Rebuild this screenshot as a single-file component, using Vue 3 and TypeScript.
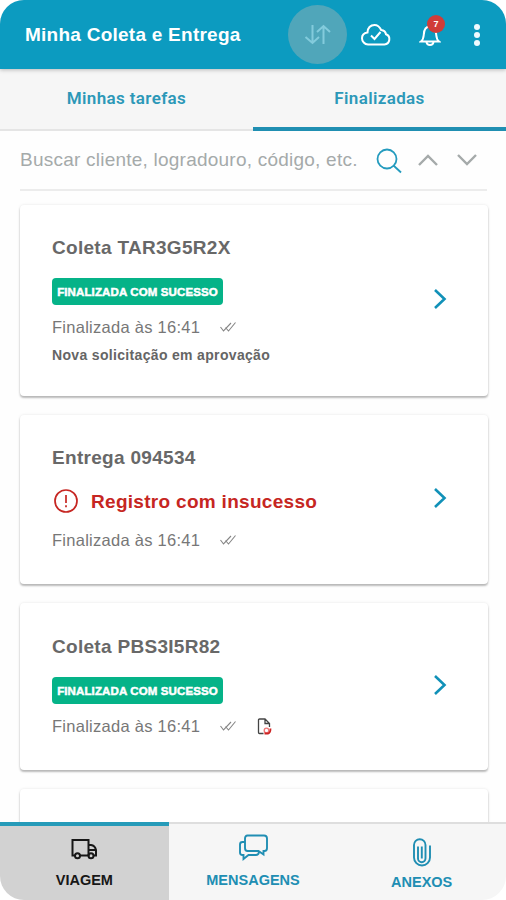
<script setup lang="ts">
interface Task {
  title: string
  success: boolean
  time: string
  note?: string
  document?: boolean
  size: string
}

const tasks: Task[] = [
  { title: 'Coleta TAR3G5R2X', success: true, time: '16:41', note: 'Nova solicitação em aprovação', size: 'tall' },
  { title: 'Entrega 094534', success: false, time: '16:41', size: 'medium' },
  { title: 'Coleta PBS3I5R82', success: true, time: '16:41', document: true, size: 'short' },
]
</script>

<template>
  <div class="screen">
    <header class="topbar">
      <h1>Minha Coleta e Entrega</h1>
      <button class="sync" aria-label="Sincronizar">
        <svg width="28" height="24" viewBox="0 0 28 24"><path d="M8.500 2v18M1.500 14l7 6 6.500-6M19.500 21V3M13 9l6.500-6 6.500 6" /></svg>
      </button>
      <svg class="cloud" width="32" height="24" viewBox="0 0 32 24">
        <path d="M8 21.500h16.500a5.300 5.300 0 0 0 1.500-10.200c-.5-2.800-2.500-4-4.800-4.300C19.500 3.500 17.500 2 14.500 2 10.500 2 7.500 5 7.500 9.500 4 10 2 12 2 15.200a6.300 6.300 0 0 0 6 6.300z" />
        <path d="m11 12.500 3.500 3.500 6-7" />
      </svg>
      <div class="bell">
        <svg width="22" height="24" viewBox="0 0 22 24">
          <path d="M2 18.500c2.500-2 2.500-3.500 2.800-7C5 6.500 7 3.500 11 3.500s6 3 6.200 8c.3 3.500.3 5 2.800 7z" />
          <path d="M7.500 19c.5 4 6.500 4 7 0M11 3.500V1" />
        </svg>
        <span class="count">7</span>
      </div>
      <div class="more"><i /><i /><i /></div>
    </header>

    <nav class="tabs">
      <a class="tab">Minhas tarefas</a>
      <a class="tab active">Finalizadas</a>
    </nav>

    <div class="search">
      <span class="placeholder">Buscar cliente, logradouro, código, etc.</span>
      <svg class="lens" width="26" height="26" viewBox="0 0 26 26"><circle cx="11" cy="11" r="9.500" /><path d="m17.500 17.500 7.500 7" /></svg>
      <svg class="arrow" width="22" height="14" viewBox="0 0 22 14"><path d="m2 12 9-9 9 9" /></svg>
      <svg class="arrow" width="22" height="14" viewBox="0 0 22 14"><path d="m2 2 9 9 9-9" /></svg>
    </div>

    <main class="list">
      <article v-for="task in tasks" :key="task.title" class="card" :class="task.size">
        <div class="info">
          <h2>{{ task.title }}</h2>
          <div v-if="task.success" class="badge"><span>FINALIZADA COM SUCESSO</span></div>
          <div v-else class="failure">
            <svg width="26" height="26" viewBox="0 0 26 26"><circle cx="13" cy="13" r="11" /><path d="M13 7v8M13 17.300v2" /></svg>
            <span>Registro com insucesso</span>
          </div>
          <div class="time">
            <span>Finalizada às {{ task.time }}</span>
            <svg class="checks" width="18" height="12" viewBox="0 0 18 12"><path d="m1.500 6 3 4L12 2M6.500 6.500l3 3.500 7-8.500" /></svg>
            <svg v-if="task.document" class="doc" width="15" height="17" viewBox="0 0 15 17">
              <path class="sheet" d="M6.500 15.500H2.500a1 1 0 0 1-1-1V2a1 1 0 0 1 1-1H8l4.500 4.500V9M8 1v4.500h4.500" />
              <circle cx="9.500" cy="12.500" r="2.300" /><path class="stamp" d="M7.500 15.500H11q2.500-.5 2.500-5" />
            </svg>
          </div>
          <p v-if="task.note">{{ task.note }}</p>
        </div>
        <svg class="chevron" width="14" height="22" viewBox="0 0 14 22"><path d="m2 2 9.500 9L2 20" /></svg>
      </article>
      <article class="card partial" />
    </main>

    <footer class="bottom">
      <a class="item current">
        <svg width="28" height="24" viewBox="0 0 28 24">
          <path d="M5 18.500H2.500V3h16v15.500H9.500M18.500 8H21q4 .5 5 5v5.500h-2M18.500 13H26" />
          <circle cx="7.500" cy="18.800" r="2.500" /><circle cx="21" cy="18.800" r="2.500" />
        </svg>
        <span>VIAGEM</span>
      </a>
      <a class="item">
        <svg width="31" height="27" viewBox="0 0 31 27">
          <path d="M9.500 1.500H26q3 0 3 3V14q0 3-2.500 3h-1v3.500L20.500 17h-11q-2.500 0-2.500-3V4.500q0-3 2.500-3z" />
          <path d="M7 8H4.500Q2 8 2 10.500v8Q2 21 4.500 21h1v4l5-4H18q2.500 0 3-3" />
        </svg>
        <span>MENSAGENS</span>
      </a>
      <a class="item clip">
        <svg width="20" height="30" viewBox="0 0 20 30"><path d="M6 9.500V21.500a3.500 3.500 0 0 0 7.500 0V8a5.500 5.500 0 0 0-11.500 0v12.500a8 8 0 0 0 16 0V8.500M9.800 9.500v12" /></svg>
        <span>ANEXOS</span>
      </a>
    </footer>
  </div>
</template>

<style>
body { margin: 0; background: #fff; }
</style>

<style scoped>
* { box-sizing: border-box; }
.screen {
  width: 506px; height: 900px; overflow: hidden; border-radius: 24px; background: #fefefe;
  display: flex; flex-direction: column; font-family: "Liberation Sans", Arial, sans-serif;
}
svg { fill: none; stroke: currentColor; stroke-width: 2; flex: none; display: block; }
h1, h2, p { margin: 0; white-space: nowrap; }
.topbar {
  flex: none; height: 69px; background: #0c9bc0; color: #fff; display: flex; align-items: center;
  padding-left: 25px; box-shadow: 0 1px 4px rgba(0, 0, 0, .25); z-index: 1;
}
h1 { width: 263px; font-size: 19px; line-height: 24px; letter-spacing: .25px; }
.sync {
  width: 59px; height: 59px; padding: 0; border: 0; border-radius: 50%; background: #50a6ba; color: #83cbdc;
  display: flex; align-items: center; justify-content: center;
}
.cloud { margin-left: 13px; }
.bell { position: relative; margin: 1px 0 0 28px; }
.bell svg { transform: translateX(-1px); }
.count {
  position: absolute; left: 7px; top: -8px; width: 18px; height: 18px; border-radius: 50%; background: #d03c38;
  font-size: 9px; line-height: 18px; font-weight: 700; text-align: center;
}
.more { margin-left: 32px; display: flex; flex-direction: column; gap: 2px; }
.more i { width: 6px; height: 6px; border-radius: 50%; background: #eefaff; }
.tabs { flex: none; height: 62px; display: flex; background: #f6f6f6; }
.tab {
  flex: 1; text-align: center; padding-top: 18px; font: 600 17px/22px Roboto, sans-serif; letter-spacing: .37px;
  color: #2c98b8; border-bottom: 2px solid #e5e5e5;
}
.tab.active { border-bottom: 4px solid #208fb2; }
.search {
  flex: none; margin: 0 19px 0 20px; height: 60px; border-bottom: 2px solid #ececec; display: flex;
  align-items: center; color: #a5aaaa;
}
.placeholder { width: 356px; font-size: 19px; line-height: 24px; letter-spacing: .23px; white-space: nowrap; }
.lens { color: #249bbe; stroke-width: 1.800; margin-top: 2px; }
.arrow { margin-left: 15px; stroke-width: 2.400; }
.arrow + .arrow { margin-left: 17px; }
.list { flex: 1; min-height: 0; overflow: hidden; padding: 14px 18px 0 20px; display: flex; flex-direction: column; gap: 19px; }
.card {
  flex: none; border-radius: 4px; background: #fff; display: flex; align-items: center;
  padding: 0 41px 0 32px; box-shadow: 0 2px 2px rgba(0, 0, 0, .25), 0 0 3px rgba(0, 0, 0, .1);
}
.tall { height: 191px; }
.medium { height: 169px; }
.short { height: 167px; }
.partial { height: 80px; }
.info { flex: 1; align-self: stretch; padding-top: 31px; }
.short .info { padding-top: 32px; }
h2 { font-size: 19px; line-height: 24px; letter-spacing: .3px; color: #686868; }
.badge {
  width: 171px; height: 27px; margin-top: 18px; border-radius: 4px; background: #05b388; color: #fff;
  display: flex; align-items: center; justify-content: center; white-space: nowrap; padding-top: 1px;
  font-size: 11.500px; font-weight: 700; letter-spacing: .12px; -webkit-text-stroke: .5px #fff;
}
.failure { height: 28px; margin-top: 18px; display: flex; align-items: center; gap: 12px; color: #c62622; }
.failure svg { margin-left: 1px; stroke-width: 1.700; margin-top: -3px; }
.failure span { font-size: 19px; font-weight: 700; letter-spacing: .3px; }
.time { height: 22px; margin-top: 11px; display: flex; align-items: center; font-size: 16.500px; letter-spacing: .27px; color: #777; }
.failure + .time { margin-top: 13px; }
.checks { margin-left: 19px; stroke-width: 1.100; color: #858585; }
.doc { margin-left: 20px; stroke-width: 1.300; color: #ed7777; }
.sheet { stroke: #444; }
.stamp { stroke: #cc2323; stroke-width: 1.800; }
p { margin-top: 6px; font-size: 14px; line-height: 22px; font-weight: 700; letter-spacing: .33px; color: #656565; }
.chevron { color: #1191b8; stroke-width: 2.600; margin-top: -3px; }
.bottom { flex: none; height: 78px; display: flex; }
.item {
  flex: 1; display: flex; flex-direction: column; align-items: center; justify-content: flex-end; gap: 9px;
  background: #f6f6f6; border-top: 2px solid #dedede; color: #208eb3; padding-bottom: 10px;
  font-size: 14.500px; line-height: 20px; font-weight: 700;
}
.item.current { background: #d2d2d2; border-top: 4px solid #269bb9; color: #171717; }
.item:not(.current) svg { stroke-width: 1.900; }
.item.clip { padding-bottom: 8px; gap: 5px; }
</style>
